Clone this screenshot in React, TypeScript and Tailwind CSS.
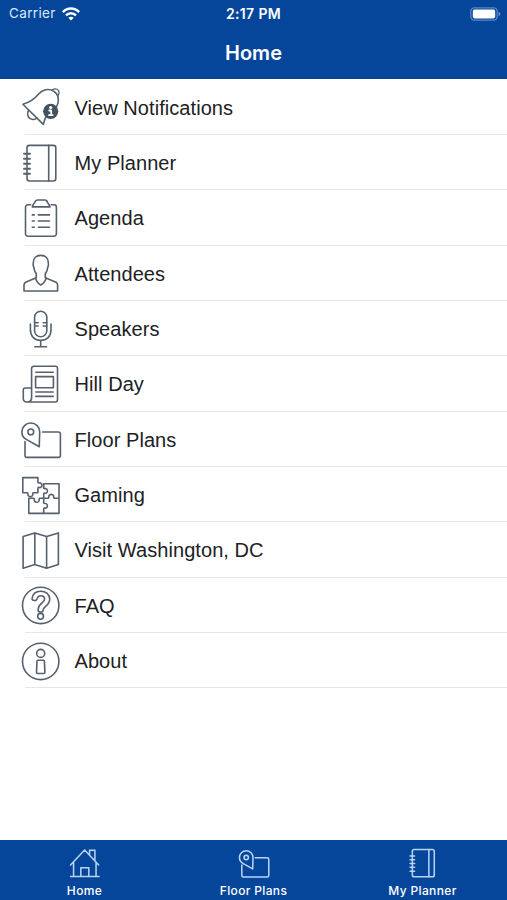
import React from 'react';

interface IconProps {
  className?: string;
  strokeWidth?: number;
}

interface IconBaseProps extends IconProps {
  children: React.ReactNode;
}

const IconBase: React.FC<IconBaseProps> = ({ className = 'h-[42px] w-[42px]', strokeWidth = 1.6, children }) => (
  <svg
    className={`shrink-0 ${className}`}
    viewBox="0 0 42 42"
    fill="none"
    stroke="currentColor"
    strokeWidth={strokeWidth}
    strokeLinecap="round"
    strokeLinejoin="round"
    aria-hidden="true"
  >
    {children}
  </svg>
);

const BellIcon: React.FC<IconProps> = (props) => (
  <IconBase {...props}>
    <path d="M2.9 18.3C10 16.4 14 13.8 18.6 8.1C22.5 3.4 28.6 2.3 33.6 5.1C38 7.8 39.2 12 37.8 17.6C36.7 22 32.5 25.2 28 27C25.6 30 24.7 33.5 23.3 38.4Z" />
    <path d="M31.7 4C34.4 2.4 37.2 2.8 38.4 4.4C39.4 6 39 8.4 38 10M34.6 5.8L37 8.3" strokeWidth="1.2" />
    <path d="M8.6 24.2C6.8 27.4 7.6 31.1 10.2 32.6C12.6 33.8 15.4 33.4 17 32" />
    <circle cx="30.7" cy="25.3" r="7.6" fill="#43525f" stroke="none" />
    <circle cx="30.7" cy="21.5" r="1.6" fill="#fff" stroke="none" />
    <path d="M29.2 24.5H31.2V29M29 29.2H32.6" stroke="#fff" strokeWidth="1.8" />
  </IconBase>
);

const PlannerIcon: React.FC<IconProps> = (props) => (
  <IconBase {...props}>
    <rect x="7" y="3.4" width="28.8" height="35.6" rx="2.4" />
    <path d="M28.7 3.4V39" />
    <path d="M4 11.7H10M4 16.7H10M4 21.7H10M4 26.7H10M4 31.7H10" strokeWidth="1.9" />
  </IconBase>
);

const AgendaIcon: React.FC<IconProps> = (props) => (
  <IconBase {...props}>
    <path d="M10.7 7.8H8A2.4 2.4 0 0 0 5.5 10.2V36.8A2.4 2.4 0 0 0 8 39.2H34A2.4 2.4 0 0 0 36.4 36.8V10.2A2.4 2.4 0 0 0 34 7.8H31.2" />
    <path d="M12.3 9.9L13.2 7.6C14 6 14.5 6.4 14.8 5.2C15.3 3.5 16 3 17.5 3H25C26.4 3 27 3.5 27.4 5.2C27.7 6.4 28.3 6 29 7.6L30 9.9Z" />
    <path d="M12.3 17.9H14.3M18.3 17.9H29.5M12.3 24H14.3M18.3 24H29.5M12.3 30.2H14.3M18.3 30.2H29.5" />
  </IconBase>
);

const AttendeeIcon: React.FC<IconProps> = (props) => (
  <IconBase {...props}>
    <path d="M16.3 21.6C14.2 19.4 14.2 17 13.8 15C12.6 13.6 13.3 12.6 13.3 10.6C13.3 6.2 16.2 3.4 20.8 3.4C25.4 3.4 28.3 6.2 28.3 10.6C28.3 12.6 29 13.6 27.8 15C27.4 17 27.4 19.4 25.3 21.6V25.7L36 30.2C37.3 30.9 37.6 31.6 37.6 33V39H4V33C4 31.6 4.4 30.9 5.6 30.2L16.3 25.7Z" />
    <path d="M15.4 26.1C16.4 29.2 18.3 31.8 20.8 33C23.3 31.8 25.2 29.2 26.2 26.1" />
  </IconBase>
);

const MicIcon: React.FC<IconProps> = (props) => (
  <IconBase {...props}>
    <rect x="14.6" y="3.2" width="12.2" height="25.6" rx="6.1" />
    <path d="M10.4 16V21.8C10.4 28.5 14.7 32.3 20.7 32.3S31 28.5 31 21.8V16M20.7 32.3V38.8M14.8 38.8H26.6" />
    <path d="M14.8 14.7H18.2M14.8 18H18.2M23.2 14.7H26.6M23.2 18H26.6" />
  </IconBase>
);

const NewsIcon: React.FC<IconProps> = (props) => (
  <IconBase {...props}>
    <path d="M11.6 35.5V5.4C11.6 4 12.4 3.3 13.8 3.3H35.4C36.8 3.3 37.5 4 37.5 5.4V36.8C37.5 38.2 36.8 39 35.4 39H6.7C4.4 39 3.3 37.5 3.3 35.5V27C3.3 25.6 4 25 5.2 25H11.6M11.6 34.5C11.6 37.2 10 39 7.4 39" />
    <path d="M15.8 9.2H33.2M15.8 29H33.2M15.8 33.4H33.2" />
    <rect x="15.6" y="13.6" width="17.8" height="11.2" />
  </IconBase>
);

const FloorPlanIcon: React.FC<IconProps> = (props) => (
  <IconBase {...props}>
    <path d="M19.3 28.8L6.3 21.4C3.4 19.8 1.9 17.1 1.9 13.9C1.9 9 5.8 5 10.8 5S19.7 9 19.7 13.9C19.7 19 19.2 23.5 19.3 28.8Z" />
    <circle cx="10.8" cy="13.9" r="2.9" />
    <path d="M22.6 14H38.3C39.6 14 40.4 14.8 40.4 16V37.4C40.4 38.6 39.6 39.4 38.3 39.4H7C5.7 39.4 5 38.6 5 37.4V23.5" />
  </IconBase>
);

const PuzzleIcon: React.FC<IconProps> = (props) => (
  <IconBase {...props}>
    <path d="M2.8 3.6H17.9V8.4C18.6 9.8 19.4 8.4 20.5 8.9C22.6 9.9 22.6 12.6 20.5 13.5C19.4 14 18.6 12.6 17.9 14V18.7H13.3C11.9 19.4 13.2 20.2 12.6 21.3C11.7 23 9 23 8.1 21.3C7.5 20.2 8.8 19.4 7.4 18.7H2.8Z" />
    <path d="M23.7 14V9.7H39V39.4H8.8V24.3H13.6C15.2 25 13.9 25.9 14.5 27C15.4 28.7 18.1 28.7 19 27C19.6 25.9 18.3 25 19.9 24.3H28.1C29.7 23.6 28.4 22.7 29 21.6C29.9 19.9 32.6 19.9 33.5 21.6C34.1 22.7 32.8 23.6 34.4 24.3H39" />
    <path d="M23.7 14C24.4 15.4 25.2 14.1 26.2 14.7C27.9 15.6 27.9 18.2 26.2 19.1C25.2 19.7 24.4 18.4 23.7 19.8V28.9C24.4 30.3 25.2 29 26.2 29.6C27.9 30.5 27.9 33.1 26.2 34C25.2 34.6 24.4 33.3 23.7 34.7V39.4" />
  </IconBase>
);

const MapIcon: React.FC<IconProps> = (props) => (
  <IconBase {...props}>
    <path d="M3.1 7.6L14.8 3.9L26.6 7.6L38.4 3.9V35.4L26.6 39.2L14.8 35.4L3.1 39.2ZM14.8 3.9V35.4M26.6 7.6V39.2" />
  </IconBase>
);

const QuestionIcon: React.FC<IconProps> = (props) => (
  <IconBase {...props}>
    <circle cx="20.7" cy="21.4" r="18.2" />
    <path d="M12.1 14.6C12.6 10 15.9 7.2 20.7 7.2C25.9 7.2 29.7 10.5 29.7 15.1C29.7 18.3 28.2 20.5 25.6 22.4C23.6 23.9 23.1 24.6 23.1 26.3C23.1 28.6 18.3 28.7 18.2 26.2C18.1 22.9 19.2 21 21.9 19C23.9 17.5 24.6 16.6 24.6 15C24.6 13.1 23 11.7 20.8 11.7C18.7 11.7 17.5 12.9 17 15.2C16.5 17.3 12 16.9 12.1 14.6Z" />
    <circle cx="20.6" cy="32.3" r="2.9" />
  </IconBase>
);

const InfoIcon: React.FC<IconProps> = (props) => (
  <IconBase {...props}>
    <circle cx="20.7" cy="21.4" r="18.2" />
    <circle cx="20.7" cy="13.4" r="4" />
    <path d="M17.8 20.2H23.6C24.1 20.2 24.4 20.5 24.4 21L24.9 32.6C24.9 33.2 24.6 33.5 24 33.5H17.4C16.8 33.5 16.5 33.2 16.5 32.6L17 21C17 20.5 17.3 20.2 17.8 20.2Z" />
  </IconBase>
);

const HomeIcon: React.FC<IconProps> = (props) => (
  <IconBase {...props}>
    <path d="M2 23.5L20.5 4L39 23.5M6 20V38.5M35.5 20V38.5M2 38.7H39.5M15.5 38.5V27.2H26V38.5M27 10V4.2H34V17.5" />
  </IconBase>
);

const WifiIcon: React.FC = () => (
  <svg className="h-[14px] w-[18px]" viewBox="0 0 18 14" fill="none" stroke="currentColor" strokeWidth="2.5" aria-hidden="true">
    <path d="M0.9 5.2C5.4 0.4 12.6 0.4 17.1 5.2" />
    <path d="M4 8.3C6.8 5.4 11.2 5.4 14 8.3" />
    <path d="M9 13.5L6.3 10.7C7.8 9.3 10.2 9.3 11.7 10.7Z" fill="currentColor" stroke="none" />
  </svg>
);

const BatteryIcon: React.FC = () => (
  <svg className="h-[14px] w-[31px]" viewBox="0 0 31 14" fill="none" aria-hidden="true">
    <rect x="0.8" y="0.8" width="26.4" height="12.4" rx="3.6" stroke="#5c87c2" strokeWidth="1.3" />
    <rect x="2.8" y="2.6" width="22.4" height="8.8" rx="1.8" fill="#fff" />
    <path d="M28.6 4.8C30.8 5.6 30.8 8.4 28.6 9.2Z" fill="#7298cc" />
  </svg>
);

const menuItems = [
  { label: 'View Notifications', icon: BellIcon },
  { label: 'My Planner', icon: PlannerIcon },
  { label: 'Agenda', icon: AgendaIcon },
  { label: 'Attendees', icon: AttendeeIcon },
  { label: 'Speakers', icon: MicIcon },
  { label: 'Hill Day', icon: NewsIcon },
  { label: 'Floor Plans', icon: FloorPlanIcon },
  { label: 'Gaming', icon: PuzzleIcon },
  { label: 'Visit Washington, DC', icon: MapIcon },
  { label: 'FAQ', icon: QuestionIcon },
  { label: 'About', icon: InfoIcon },
];

const tabs = [
  { label: 'Home', icon: HomeIcon },
  { label: 'Floor Plans', icon: FloorPlanIcon },
  { label: 'My Planner', icon: PlannerIcon },
];

const App: React.FC = () => {
  return (
    <div className="flex h-[900px] w-[507px] flex-col overflow-hidden bg-white font-['Inter',sans-serif]">
      <header className="h-[79px] shrink-0 bg-[#05469b] text-white">
        <div className="grid h-[27px] grid-cols-[1fr_80px_1fr] items-center pl-[9px] pr-[6px]">
          <div className="flex items-center gap-[6px] text-[13.5px] tracking-[0.35px] text-[#dce9f8]">
            Carrier
            <span className="text-white"><WifiIcon /></span>
          </div>
          <div className="-ml-[3px] text-center text-[14px] font-semibold whitespace-nowrap tracking-[0.35px]">2:17 PM</div>
          <div className="flex justify-end"><BatteryIcon /></div>
        </div>
        <h1 className="pt-[11px] text-center text-[20px] leading-[30px] font-semibold">Home</h1>
      </header>

      <nav className="flex-1 pt-[0.5px]">
        {menuItems.map(({ label, icon: Icon }) => (
          <a key={label} className="flex h-[55.35px] pl-[20px] text-[#56616e]">
            <span className="flex w-[5px] items-center">
              <Icon />
            </span>
            <span className="flex flex-1 items-center border-b border-[#e4e6e8] pl-[49.5px] pt-[2px] font-['Liberation_Sans',Arial,sans-serif] text-[20px] tracking-[0.06px] text-[#202124]">
              {label}
            </span>
          </a>
        ))}
      </nav>

      <footer className="grid h-[60px] shrink-0 grid-cols-3 bg-[#05469b]">
        {tabs.map(({ label, icon: Icon }) => (
          <button key={label} type="button" className="flex flex-col items-center pt-[7px] text-[#b9d3f3]">
            <Icon className="h-[32px] w-[32px]" strokeWidth={2} />
            <span className="mt-[4px] text-[12px] leading-[16px] font-medium tracking-[0.35px] text-white">{label}</span>
          </button>
        ))}
      </footer>
    </div>
  );
};

export default App;
